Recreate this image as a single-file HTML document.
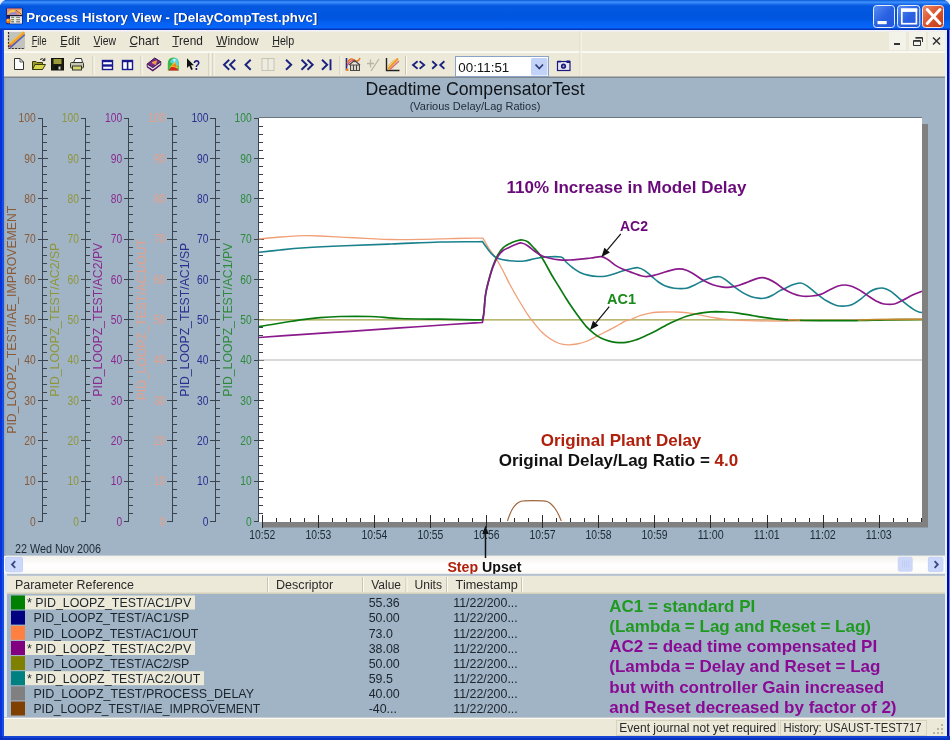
<!DOCTYPE html>
<html><head><meta charset="utf-8"><title>Process History View - [DelayCompTest.phvc]</title>
<style>html,body{margin:0;padding:0;background:#fff;}body{width:950px;height:740px;overflow:hidden;position:relative}svg{display:block}text{font-family:"Liberation Sans", sans-serif;}</style>
</head><body>
<svg width="950" height="740" viewBox="0 0 950 740" font-family='"Liberation Sans", sans-serif'>
<g style="filter:blur(0.45px)">
<defs>
<linearGradient id="gt" x1="0" y1="0" x2="0" y2="1"><stop offset="0" stop-color="#0a58d6"/><stop offset="0.04" stop-color="#2a7cf0"/><stop offset="0.08" stop-color="#3c90fb"/><stop offset="0.14" stop-color="#1c6cec"/><stop offset="0.2" stop-color="#0458e0"/><stop offset="0.62" stop-color="#0055e0"/><stop offset="0.75" stop-color="#0560f0"/><stop offset="0.93" stop-color="#0766fb"/><stop offset="0.96" stop-color="#0540c8"/><stop offset="1" stop-color="#0030b0"/></linearGradient>
<linearGradient id="gb" x1="0" y1="0" x2="1" y2="1"><stop offset="0" stop-color="#5b8ff5"/><stop offset="0.5" stop-color="#2a62e2"/><stop offset="1" stop-color="#2455d8"/></linearGradient>
<linearGradient id="gc" x1="0" y1="0" x2="1" y2="1"><stop offset="0" stop-color="#ee8a6a"/><stop offset="0.5" stop-color="#d9532d"/><stop offset="1" stop-color="#c23a18"/></linearGradient>
<linearGradient id="gs" x1="0" y1="0" x2="0" y2="1"><stop offset="0" stop-color="#f4f2ec"/><stop offset="0.5" stop-color="#ffffff"/><stop offset="1" stop-color="#fbfaf6"/></linearGradient>
</defs>
<rect x="0" y="0" width="950" height="740" fill="#0a3ad0"/>
<rect x="0" y="0" width="950" height="30" fill="url(#gt)"/>
<rect x="0" y="30" width="4" height="710" fill="#0a30d8"/><rect x="2" y="30" width="2" height="706" fill="#1450e6"/>
<rect x="946" y="30" width="4" height="710" fill="#000c94"/><rect x="949" y="30" width="1" height="710" fill="#7878f4"/>
<rect x="0" y="736" width="950" height="4" fill="#0a30c0"/><rect x="3" y="736" width="944" height="2" fill="#1444d4"/>
<path d="M0,0 L5,0 Q1.5,1.5 0,5 Z" fill="#e8eefc"/><path d="M950,0 L945,0 Q948.5,1.5 950,5 Z" fill="#e8eefc"/>
<g><rect x="6.3" y="7.8" width="16.4" height="16.4" rx="1" fill="#141a78"/><rect x="7" y="8.4" width="15" height="7" fill="#e48c74"/><path d="M7.5,13.5 Q11,8.5 15.5,10.2 L14,12.6 Q10.5,11.5 8,14.5 Z" fill="#f2cc4c"/><path d="M8,14.6 Q11,11.8 15,12.2 L18,14.8 Z" fill="#8c8cda"/><path d="M15.5,9.6 L22,10.5 V14.8 H19.5 Z" fill="#f0c07c"/><path d="M15.8,10 L21.6,14.4" stroke="#8a4a3a" stroke-width="0.9"/><rect x="7" y="15" width="15" height="1" fill="#1a1a2a"/><rect x="10" y="16.2" width="12" height="7.4" fill="#e6e6e2"/><path d="M11.2,17.4h2.8M11.2,19.6h2.8M11.2,21.8h2.8" stroke="#6e8a6a" stroke-width="1.4"/><path d="M16.2,17.4h3.8M16.2,19.6h3.8M16.2,21.8h3.8" stroke="#8a8a84" stroke-width="1.4"/><circle cx="8.4" cy="21" r="2.4" fill="#ee7a18"/><circle cx="7.9" cy="19.9" r="1" fill="#f8d048"/></g>
<text x="27.1" y="22.2" font-size="13.2" fill="#0a2a80" textLength="291" lengthAdjust="spacingAndGlyphs" font-weight="bold">Process History View - [DelayCompTest.phvc]</text>
<text x="26.3" y="21.5" font-size="13.2" fill="#ffffff" textLength="291" lengthAdjust="spacingAndGlyphs" font-weight="bold">Process History View - [DelayCompTest.phvc]</text>
<rect x="873.5" y="5.5" width="21" height="22" rx="3" fill="url(#gb)" stroke="#e6eefc" stroke-width="1"/>
<rect x="877.5" y="21" width="9.2" height="3.2" fill="#fff"/>
<rect x="897.5" y="5.5" width="22.3" height="22" rx="3" fill="url(#gb)" stroke="#e6eefc" stroke-width="1"/>
<rect x="901.8" y="9.3" width="14.6" height="14.4" fill="none" stroke="#fff" stroke-width="1.7"/><rect x="901" y="8.5" width="16.2" height="3.4" fill="#fff"/>
<rect x="922.5" y="5.5" width="21" height="22" rx="3" fill="url(#gc)" stroke="#f6e6e0" stroke-width="1"/>
<path d="M927.2,9.6 L940,23.4 M940,9.6 L927.2,23.4" stroke="#fff" stroke-width="3" stroke-linecap="round"/>
<rect x="4" y="30" width="942" height="22" fill="#ece9d8"/><rect x="4" y="30" width="942" height="1.6" fill="#f2f2f8"/>
<rect x="4" y="51" width="942" height="1" fill="#f8f7f0"/>
<g><rect x="8" y="32" width="17" height="17" fill="#c2c2be"/><path d="M8.5,32V48.5H25" stroke="#2a2a2a" stroke-width="1.2" stroke-dasharray="2 1.3" fill="none"/><path d="M10,47.5 L24.5,34.5" stroke="#4a5ac8" stroke-width="2.2"/><path d="M9.5,45 L24,32.5" stroke="#f0a028" stroke-width="3"/><path d="M9.5,43.6 L22.5,32.4" stroke="#f4d050" stroke-width="1"/><path d="M9.2,46.6 L11,45" stroke="#d85a3a" stroke-width="2"/></g>
<text x="31.7" y="44.8" font-size="12.6" fill="#222" textLength="14.8" lengthAdjust="spacingAndGlyphs">File</text>
<text x="60.3" y="44.8" font-size="12.6" fill="#222" textLength="19.7" lengthAdjust="spacingAndGlyphs">Edit</text>
<text x="93.6" y="44.8" font-size="12.6" fill="#222" textLength="22.4" lengthAdjust="spacingAndGlyphs">View</text>
<text x="129.6" y="44.8" font-size="12.6" fill="#222" textLength="29.6" lengthAdjust="spacingAndGlyphs">Chart</text>
<text x="172.3" y="44.8" font-size="12.6" fill="#222" textLength="30.6" lengthAdjust="spacingAndGlyphs">Trend</text>
<text x="216.2" y="44.8" font-size="12.6" fill="#222" textLength="42.3" lengthAdjust="spacingAndGlyphs">Window</text>
<text x="272.2" y="44.8" font-size="12.6" fill="#222" textLength="22" lengthAdjust="spacingAndGlyphs">Help</text>
<rect x="31.7" y="46" width="5.5" height="1" fill="#333"/>
<rect x="60.3" y="46" width="6" height="1" fill="#333"/>
<rect x="93.6" y="46" width="6.5" height="1" fill="#333"/>
<rect x="129.6" y="46" width="7" height="1" fill="#333"/>
<rect x="172.3" y="46" width="6" height="1" fill="#333"/>
<rect x="216.2" y="46" width="9.5" height="1" fill="#333"/>
<rect x="272.2" y="46" width="7" height="1" fill="#333"/>
<rect x="889" y="32" width="17" height="18" fill="#f4f3ea"/>
<rect x="909" y="32" width="17" height="18" fill="#f4f3ea"/>
<rect x="928" y="32" width="17" height="18" fill="#f4f3ea"/>
<rect x="894" y="43" width="6" height="2" fill="#333"/>
<path d="M915.5,37.5H922.5V42 M913.5,40.5H920.5V45.5H913.5Z M913.5,41.3H920.5 M915.5,38.2H922.5" stroke="#333" stroke-width="1" fill="none"/>
<path d="M933,37.5 L940,44.5 M940,37.5 L933,44.5" stroke="#333" stroke-width="1.5"/>
<rect x="4" y="52" width="942" height="26" fill="#ece9d8"/>
<rect x="4" y="52" width="942" height="1" fill="#fbfaf4"/>
<rect x="4" y="76.5" width="942" height="1.5" fill="#7e868e"/>
<rect x="92.5" y="56" width="1" height="19" fill="#c8c5b2"/><rect x="93.5" y="56" width="1" height="19" fill="#fbfaf4"/>
<rect x="140.5" y="56" width="1" height="19" fill="#c8c5b2"/><rect x="141.5" y="56" width="1" height="19" fill="#fbfaf4"/>
<rect x="339.5" y="56" width="1" height="19" fill="#c8c5b2"/><rect x="340.5" y="56" width="1" height="19" fill="#fbfaf4"/>
<rect x="405" y="56" width="1" height="19" fill="#c8c5b2"/><rect x="406" y="56" width="1" height="19" fill="#fbfaf4"/>
<rect x="208.5" y="53" width="1" height="23" fill="#c4c1ae"/><rect x="209.5" y="53" width="1" height="23" fill="#fbfaf4"/>
<rect x="212.5" y="53" width="1" height="23" fill="#c4c1ae"/><rect x="213.5" y="53" width="1" height="23" fill="#fbfaf4"/>
<rect x="579.5" y="31" width="1" height="45" fill="#dcd9c8"/><rect x="580.5" y="31" width="1" height="45" fill="#f8f7f0"/>
<path d="M14.5,58.5H20L23.5,62V69.5H14.5Z" fill="#fff" stroke="#333" stroke-width="1"/><path d="M20,58.5V62H23.5" fill="none" stroke="#333" stroke-width="0.8"/>
<path d="M32.5,61.5H36L37,62.5H42.5V69.5H32.5Z" fill="#9a9a20" stroke="#3a3a10" stroke-width="1"/><path d="M32.5,69.5L35,64.5H45.5L42.5,69.5Z" fill="#d6d64a" stroke="#3a3a10" stroke-width="1"/><path d="M40,59.5Q42.5,57.5 44.5,60 M44.8,58V60.6H42.4" stroke="#222" stroke-width="1" fill="none"/>
<rect x="51.5" y="58.5" width="12" height="11.5" fill="#1a1a10" stroke="#111" stroke-width="1"/><rect x="53.5" y="59" width="8" height="5" fill="#9a9a3a"/><rect x="54.5" y="65.5" width="6" height="4.5" fill="#111"/><rect x="58.5" y="66.5" width="2" height="3" fill="#d8d8c8"/>
<path d="M73.5,62.5L75.5,58.5H81.5L82.5,62.5" fill="#fff" stroke="#333" stroke-width="1"/><rect x="70.5" y="62.5" width="13" height="5.5" rx="1" fill="#c8c8b0" stroke="#333" stroke-width="1"/><rect x="72.5" y="66" width="9" height="4" fill="#d8d86a" stroke="#333" stroke-width="1"/>
<rect x="102.5" y="60.5" width="10" height="9" fill="#fff" stroke="#1a1a90" stroke-width="1.4"/><rect x="102" y="60" width="11" height="2.2" fill="#1a1a90"/><rect x="102" y="64.3" width="11" height="2.4" fill="#1a1a90"/>
<rect x="122.5" y="60.5" width="10" height="9" fill="#fff" stroke="#1a1a90" stroke-width="1.4"/><rect x="122" y="60" width="11" height="2.2" fill="#1a1a90"/><rect x="126.8" y="60" width="1.6" height="10" fill="#1a1a90"/>
<path d="M147.2,64 L154.7,58 L160.8,61.8 L152.8,67.6 Z" fill="#7a2a8a" stroke="#3a1048" stroke-width="1"/><path d="M147.2,64 V66.8 L152.8,70.6 L160.8,64.6 V61.8 L152.8,67.6 Z" fill="#e4dcec" stroke="#3a1048" stroke-width="0.9"/><path d="M147.2,66.8 L152.8,70.6 L160.8,64.6" fill="none" stroke="#5a1a6a" stroke-width="1.3"/><path d="M152,62.6 L156.5,60.8 L155.5,64.6 Z" fill="#f09a28" stroke="#f0b050" stroke-width="0.8"/>
<path d="M167.8,70.5 V63.5 Q167.8,57.5 173.3,57.5 Q178.8,57.5 178.8,63.5 V70.5 Z" fill="#3ab84a"/><path d="M170,62 Q172,57 176.5,58.6 Q178.6,60 178.4,66 L174,64.5Z" fill="#5ad6e6"/><path d="M172.5,59.5 L175.5,59 L175,62 Z" fill="#e8f8fa"/><path d="M169.5,67.5 L175,61.5 L178,68 Z" fill="#f0d020"/><path d="M171.5,66 L175.5,63 L176.8,67 Z" fill="#f08020"/><path d="M168.5,70.6 L171.5,66.8 L175.5,67.6 L178.8,70.6 Z" fill="#e02020"/>
<path d="M187,58.2 L187,68 L189.3,65.8 L191.2,70 L192.8,69.3 L191,65.2 L194,65.2 Z" fill="#111"/>
<text x="193" y="69.6" font-size="15" fill="#1a1a80" textLength="7.2" lengthAdjust="spacingAndGlyphs" font-weight="bold">?</text>
<path d="M229.2,59.8 L224,64.8 L229.2,69.8 M235.2,59.8 L230,64.8 L235.2,69.8 M250.7,59.8 L245.5,64.8 L250.7,69.8 M286,59.8 L291.2,64.8 L286,69.8 M301.5,59.8 L306.7,64.8 L301.5,69.8 M307.5,59.8 L312.7,64.8 L307.5,69.8 M322,59.8 L327.2,64.8 L322,69.8 M330.5,59.3V70.3" fill="none" stroke="#1a2380" stroke-width="1.9"/>
<rect x="262" y="58.5" width="12" height="12" fill="#eeece0" stroke="#c6c4b4" stroke-width="1"/><path d="M268,58.5V70.5" stroke="#c6c4b4" stroke-width="1"/>
<g><path d="M346.5,58V70.5" stroke="#1a2a90" stroke-width="1.6"/><path d="M347,63 Q350,57 354,60 T360,58" stroke="#e8782a" stroke-width="1.6" fill="none"/><path d="M347,66 Q351,58 355,62" stroke="#d84a6a" stroke-width="1.2" fill="none"/><path d="M349,65 L354.5,60.5 L360,65" stroke="#4a4a4a" stroke-width="1.3" fill="none"/><rect x="350.5" y="65" width="9" height="5.5" fill="#d8d4c8" stroke="#4a4a4a" stroke-width="1"/><path d="M353.5,65V70.5M356.5,65V70.5" stroke="#4a4a4a" stroke-width="1"/><rect x="346" y="68.5" width="2.5" height="2.5" fill="#f08a20"/></g>
<path d="M367,63.5H374 M370.5,59.5V67.5 M379,59 L371,71" stroke="#b8b5a2" stroke-width="1.3" fill="none"/>
<path d="M386.5,58V70.5H399.5" stroke="#222" stroke-width="1.4" fill="none"/><path d="M388,69 L398,58.5" stroke="#f09a28" stroke-width="2.2"/><path d="M390,69.5 L399,61" stroke="#d86a7a" stroke-width="1.3"/><path d="M387.5,66.5 L394,59.5" stroke="#e8c040" stroke-width="1"/>
<path d="M417.6,61.3 L413,65.0 L417.6,68.7 M419.6,61.3 L424.20000000000005,65.0 L419.6,68.7 M432.2,61.3 L436.4,65.0 L432.2,68.7 M444.4,61.3 L440.2,65.0 L444.4,68.7" fill="none" stroke="#1a2380" stroke-width="1.8"/>
<rect x="455.5" y="56.5" width="93" height="20" fill="#fff" stroke="#8aa2c4" stroke-width="1"/>
<rect x="531" y="58" width="16.5" height="17.5" rx="1.5" fill="#c3d3f7"/>
<path d="M535.5,64.5 L539.3,68.5 L543,64.5" stroke="#2a3a80" stroke-width="1.7" fill="none"/>
<text x="458.3" y="71.6" font-size="13.4" fill="#111" textLength="51" lengthAdjust="spacingAndGlyphs">00:11:51</text>
<rect x="557.5" y="61.5" width="12.5" height="9" fill="#e8e8f4" stroke="#1a1a80" stroke-width="1.2"/><circle cx="563.5" cy="66.2" r="2.6" fill="#1a1a80"/><circle cx="563.5" cy="66.2" r="1" fill="#aab"/><rect x="566.5" y="60.5" width="3.5" height="2.5" fill="#1a1a80"/><rect x="558" y="60.8" width="3" height="1.6" fill="#1a1a80"/>
<rect x="4" y="78" width="942" height="478" fill="#a0b4c6"/>
<rect x="263" y="124" width="665" height="403.5" fill="#808080"/>
<rect x="259" y="118" width="663" height="404" fill="#ffffff"/>
<rect x="259" y="117" width="663" height="1" fill="#6a7680"/>
<g stroke="#3a444e" stroke-width="1" shape-rendering="crispEdges">
<line x1="258.5" y1="118" x2="258.5" y2="522"/>
<line x1="253.5" y1="521.5" x2="258.5" y2="521.5"/>
<line x1="258.5" y1="513.4" x2="263.0" y2="513.4"/>
<line x1="258.5" y1="505.4" x2="263.0" y2="505.4"/>
<line x1="258.5" y1="497.3" x2="263.0" y2="497.3"/>
<line x1="258.5" y1="489.2" x2="263.0" y2="489.2"/>
<line x1="253.5" y1="481.1" x2="263.5" y2="481.1"/>
<line x1="258.5" y1="473.1" x2="263.0" y2="473.1"/>
<line x1="258.5" y1="465.0" x2="263.0" y2="465.0"/>
<line x1="258.5" y1="456.9" x2="263.0" y2="456.9"/>
<line x1="258.5" y1="448.9" x2="263.0" y2="448.9"/>
<line x1="253.5" y1="440.8" x2="263.5" y2="440.8"/>
<line x1="258.5" y1="432.7" x2="263.0" y2="432.7"/>
<line x1="258.5" y1="424.7" x2="263.0" y2="424.7"/>
<line x1="258.5" y1="416.6" x2="263.0" y2="416.6"/>
<line x1="258.5" y1="408.5" x2="263.0" y2="408.5"/>
<line x1="253.5" y1="400.4" x2="263.5" y2="400.4"/>
<line x1="258.5" y1="392.4" x2="263.0" y2="392.4"/>
<line x1="258.5" y1="384.3" x2="263.0" y2="384.3"/>
<line x1="258.5" y1="376.2" x2="263.0" y2="376.2"/>
<line x1="258.5" y1="368.2" x2="263.0" y2="368.2"/>
<line x1="253.5" y1="360.1" x2="263.5" y2="360.1"/>
<line x1="258.5" y1="352.0" x2="263.0" y2="352.0"/>
<line x1="258.5" y1="344.0" x2="263.0" y2="344.0"/>
<line x1="258.5" y1="335.9" x2="263.0" y2="335.9"/>
<line x1="258.5" y1="327.8" x2="263.0" y2="327.8"/>
<line x1="253.5" y1="319.8" x2="263.5" y2="319.8"/>
<line x1="258.5" y1="311.7" x2="263.0" y2="311.7"/>
<line x1="258.5" y1="303.6" x2="263.0" y2="303.6"/>
<line x1="258.5" y1="295.5" x2="263.0" y2="295.5"/>
<line x1="258.5" y1="287.5" x2="263.0" y2="287.5"/>
<line x1="253.5" y1="279.4" x2="263.5" y2="279.4"/>
<line x1="258.5" y1="271.3" x2="263.0" y2="271.3"/>
<line x1="258.5" y1="263.3" x2="263.0" y2="263.3"/>
<line x1="258.5" y1="255.2" x2="263.0" y2="255.2"/>
<line x1="258.5" y1="247.1" x2="263.0" y2="247.1"/>
<line x1="253.5" y1="239.1" x2="263.5" y2="239.1"/>
<line x1="258.5" y1="231.0" x2="263.0" y2="231.0"/>
<line x1="258.5" y1="222.9" x2="263.0" y2="222.9"/>
<line x1="258.5" y1="214.8" x2="263.0" y2="214.8"/>
<line x1="258.5" y1="206.8" x2="263.0" y2="206.8"/>
<line x1="253.5" y1="198.7" x2="263.5" y2="198.7"/>
<line x1="258.5" y1="190.6" x2="263.0" y2="190.6"/>
<line x1="258.5" y1="182.6" x2="263.0" y2="182.6"/>
<line x1="258.5" y1="174.5" x2="263.0" y2="174.5"/>
<line x1="258.5" y1="166.4" x2="263.0" y2="166.4"/>
<line x1="253.5" y1="158.3" x2="263.5" y2="158.3"/>
<line x1="258.5" y1="150.3" x2="263.0" y2="150.3"/>
<line x1="258.5" y1="142.2" x2="263.0" y2="142.2"/>
<line x1="258.5" y1="134.1" x2="263.0" y2="134.1"/>
<line x1="258.5" y1="126.1" x2="263.0" y2="126.1"/>
<line x1="253.5" y1="118.0" x2="258.5" y2="118.0"/>
</g>
<g fill="#2e8b3a" font-size="12.5" text-anchor="end">
<text x="251.7" y="525.8" textLength="5.7" lengthAdjust="spacingAndGlyphs">0</text>
<text x="251.7" y="485.4" textLength="11.4" lengthAdjust="spacingAndGlyphs">10</text>
<text x="251.7" y="445.1" textLength="11.4" lengthAdjust="spacingAndGlyphs">20</text>
<text x="251.7" y="404.8" textLength="11.4" lengthAdjust="spacingAndGlyphs">30</text>
<text x="251.7" y="364.4" textLength="11.4" lengthAdjust="spacingAndGlyphs">40</text>
<text x="251.7" y="324.1" textLength="11.4" lengthAdjust="spacingAndGlyphs">50</text>
<text x="251.7" y="283.7" textLength="11.4" lengthAdjust="spacingAndGlyphs">60</text>
<text x="251.7" y="243.4" textLength="11.4" lengthAdjust="spacingAndGlyphs">70</text>
<text x="251.7" y="203.0" textLength="11.4" lengthAdjust="spacingAndGlyphs">80</text>
<text x="251.7" y="162.6" textLength="11.4" lengthAdjust="spacingAndGlyphs">90</text>
<text x="251.7" y="122.3" textLength="17.1" lengthAdjust="spacingAndGlyphs">100</text>
</g>
<text transform="translate(231.9,396.7) rotate(-90)" font-size="12.5" fill="#2e8b3a" textLength="154" lengthAdjust="spacingAndGlyphs">PID_LOOPZ_TEST/AC1/PV</text>
<g stroke="#3a444e" stroke-width="1" shape-rendering="crispEdges">
<line x1="215.3" y1="118" x2="215.3" y2="522"/>
<line x1="210.3" y1="521.5" x2="215.3" y2="521.5"/>
<line x1="215.3" y1="513.4" x2="219.8" y2="513.4"/>
<line x1="215.3" y1="505.4" x2="219.8" y2="505.4"/>
<line x1="215.3" y1="497.3" x2="219.8" y2="497.3"/>
<line x1="215.3" y1="489.2" x2="219.8" y2="489.2"/>
<line x1="210.3" y1="481.1" x2="220.3" y2="481.1"/>
<line x1="215.3" y1="473.1" x2="219.8" y2="473.1"/>
<line x1="215.3" y1="465.0" x2="219.8" y2="465.0"/>
<line x1="215.3" y1="456.9" x2="219.8" y2="456.9"/>
<line x1="215.3" y1="448.9" x2="219.8" y2="448.9"/>
<line x1="210.3" y1="440.8" x2="220.3" y2="440.8"/>
<line x1="215.3" y1="432.7" x2="219.8" y2="432.7"/>
<line x1="215.3" y1="424.7" x2="219.8" y2="424.7"/>
<line x1="215.3" y1="416.6" x2="219.8" y2="416.6"/>
<line x1="215.3" y1="408.5" x2="219.8" y2="408.5"/>
<line x1="210.3" y1="400.4" x2="220.3" y2="400.4"/>
<line x1="215.3" y1="392.4" x2="219.8" y2="392.4"/>
<line x1="215.3" y1="384.3" x2="219.8" y2="384.3"/>
<line x1="215.3" y1="376.2" x2="219.8" y2="376.2"/>
<line x1="215.3" y1="368.2" x2="219.8" y2="368.2"/>
<line x1="210.3" y1="360.1" x2="220.3" y2="360.1"/>
<line x1="215.3" y1="352.0" x2="219.8" y2="352.0"/>
<line x1="215.3" y1="344.0" x2="219.8" y2="344.0"/>
<line x1="215.3" y1="335.9" x2="219.8" y2="335.9"/>
<line x1="215.3" y1="327.8" x2="219.8" y2="327.8"/>
<line x1="210.3" y1="319.8" x2="220.3" y2="319.8"/>
<line x1="215.3" y1="311.7" x2="219.8" y2="311.7"/>
<line x1="215.3" y1="303.6" x2="219.8" y2="303.6"/>
<line x1="215.3" y1="295.5" x2="219.8" y2="295.5"/>
<line x1="215.3" y1="287.5" x2="219.8" y2="287.5"/>
<line x1="210.3" y1="279.4" x2="220.3" y2="279.4"/>
<line x1="215.3" y1="271.3" x2="219.8" y2="271.3"/>
<line x1="215.3" y1="263.3" x2="219.8" y2="263.3"/>
<line x1="215.3" y1="255.2" x2="219.8" y2="255.2"/>
<line x1="215.3" y1="247.1" x2="219.8" y2="247.1"/>
<line x1="210.3" y1="239.1" x2="220.3" y2="239.1"/>
<line x1="215.3" y1="231.0" x2="219.8" y2="231.0"/>
<line x1="215.3" y1="222.9" x2="219.8" y2="222.9"/>
<line x1="215.3" y1="214.8" x2="219.8" y2="214.8"/>
<line x1="215.3" y1="206.8" x2="219.8" y2="206.8"/>
<line x1="210.3" y1="198.7" x2="220.3" y2="198.7"/>
<line x1="215.3" y1="190.6" x2="219.8" y2="190.6"/>
<line x1="215.3" y1="182.6" x2="219.8" y2="182.6"/>
<line x1="215.3" y1="174.5" x2="219.8" y2="174.5"/>
<line x1="215.3" y1="166.4" x2="219.8" y2="166.4"/>
<line x1="210.3" y1="158.3" x2="220.3" y2="158.3"/>
<line x1="215.3" y1="150.3" x2="219.8" y2="150.3"/>
<line x1="215.3" y1="142.2" x2="219.8" y2="142.2"/>
<line x1="215.3" y1="134.1" x2="219.8" y2="134.1"/>
<line x1="215.3" y1="126.1" x2="219.8" y2="126.1"/>
<line x1="210.3" y1="118.0" x2="215.3" y2="118.0"/>
</g>
<g fill="#2b2f8f" font-size="12.5" text-anchor="end">
<text x="208.5" y="525.8" textLength="5.7" lengthAdjust="spacingAndGlyphs">0</text>
<text x="208.5" y="485.4" textLength="11.4" lengthAdjust="spacingAndGlyphs">10</text>
<text x="208.5" y="445.1" textLength="11.4" lengthAdjust="spacingAndGlyphs">20</text>
<text x="208.5" y="404.8" textLength="11.4" lengthAdjust="spacingAndGlyphs">30</text>
<text x="208.5" y="364.4" textLength="11.4" lengthAdjust="spacingAndGlyphs">40</text>
<text x="208.5" y="324.1" textLength="11.4" lengthAdjust="spacingAndGlyphs">50</text>
<text x="208.5" y="283.7" textLength="11.4" lengthAdjust="spacingAndGlyphs">60</text>
<text x="208.5" y="243.4" textLength="11.4" lengthAdjust="spacingAndGlyphs">70</text>
<text x="208.5" y="203.0" textLength="11.4" lengthAdjust="spacingAndGlyphs">80</text>
<text x="208.5" y="162.6" textLength="11.4" lengthAdjust="spacingAndGlyphs">90</text>
<text x="208.5" y="122.3" textLength="17.1" lengthAdjust="spacingAndGlyphs">100</text>
</g>
<text transform="translate(188.7,396.7) rotate(-90)" font-size="12.5" fill="#2b2f8f" textLength="154" lengthAdjust="spacingAndGlyphs">PID_LOOPZ_TEST/AC1/SP</text>
<g stroke="#3a444e" stroke-width="1" shape-rendering="crispEdges">
<line x1="172.1" y1="118" x2="172.1" y2="522"/>
<line x1="167.1" y1="521.5" x2="172.1" y2="521.5"/>
<line x1="172.1" y1="513.4" x2="176.6" y2="513.4"/>
<line x1="172.1" y1="505.4" x2="176.6" y2="505.4"/>
<line x1="172.1" y1="497.3" x2="176.6" y2="497.3"/>
<line x1="172.1" y1="489.2" x2="176.6" y2="489.2"/>
<line x1="167.1" y1="481.1" x2="177.1" y2="481.1"/>
<line x1="172.1" y1="473.1" x2="176.6" y2="473.1"/>
<line x1="172.1" y1="465.0" x2="176.6" y2="465.0"/>
<line x1="172.1" y1="456.9" x2="176.6" y2="456.9"/>
<line x1="172.1" y1="448.9" x2="176.6" y2="448.9"/>
<line x1="167.1" y1="440.8" x2="177.1" y2="440.8"/>
<line x1="172.1" y1="432.7" x2="176.6" y2="432.7"/>
<line x1="172.1" y1="424.7" x2="176.6" y2="424.7"/>
<line x1="172.1" y1="416.6" x2="176.6" y2="416.6"/>
<line x1="172.1" y1="408.5" x2="176.6" y2="408.5"/>
<line x1="167.1" y1="400.4" x2="177.1" y2="400.4"/>
<line x1="172.1" y1="392.4" x2="176.6" y2="392.4"/>
<line x1="172.1" y1="384.3" x2="176.6" y2="384.3"/>
<line x1="172.1" y1="376.2" x2="176.6" y2="376.2"/>
<line x1="172.1" y1="368.2" x2="176.6" y2="368.2"/>
<line x1="167.1" y1="360.1" x2="177.1" y2="360.1"/>
<line x1="172.1" y1="352.0" x2="176.6" y2="352.0"/>
<line x1="172.1" y1="344.0" x2="176.6" y2="344.0"/>
<line x1="172.1" y1="335.9" x2="176.6" y2="335.9"/>
<line x1="172.1" y1="327.8" x2="176.6" y2="327.8"/>
<line x1="167.1" y1="319.8" x2="177.1" y2="319.8"/>
<line x1="172.1" y1="311.7" x2="176.6" y2="311.7"/>
<line x1="172.1" y1="303.6" x2="176.6" y2="303.6"/>
<line x1="172.1" y1="295.5" x2="176.6" y2="295.5"/>
<line x1="172.1" y1="287.5" x2="176.6" y2="287.5"/>
<line x1="167.1" y1="279.4" x2="177.1" y2="279.4"/>
<line x1="172.1" y1="271.3" x2="176.6" y2="271.3"/>
<line x1="172.1" y1="263.3" x2="176.6" y2="263.3"/>
<line x1="172.1" y1="255.2" x2="176.6" y2="255.2"/>
<line x1="172.1" y1="247.1" x2="176.6" y2="247.1"/>
<line x1="167.1" y1="239.1" x2="177.1" y2="239.1"/>
<line x1="172.1" y1="231.0" x2="176.6" y2="231.0"/>
<line x1="172.1" y1="222.9" x2="176.6" y2="222.9"/>
<line x1="172.1" y1="214.8" x2="176.6" y2="214.8"/>
<line x1="172.1" y1="206.8" x2="176.6" y2="206.8"/>
<line x1="167.1" y1="198.7" x2="177.1" y2="198.7"/>
<line x1="172.1" y1="190.6" x2="176.6" y2="190.6"/>
<line x1="172.1" y1="182.6" x2="176.6" y2="182.6"/>
<line x1="172.1" y1="174.5" x2="176.6" y2="174.5"/>
<line x1="172.1" y1="166.4" x2="176.6" y2="166.4"/>
<line x1="167.1" y1="158.3" x2="177.1" y2="158.3"/>
<line x1="172.1" y1="150.3" x2="176.6" y2="150.3"/>
<line x1="172.1" y1="142.2" x2="176.6" y2="142.2"/>
<line x1="172.1" y1="134.1" x2="176.6" y2="134.1"/>
<line x1="172.1" y1="126.1" x2="176.6" y2="126.1"/>
<line x1="167.1" y1="118.0" x2="172.1" y2="118.0"/>
</g>
<g fill="#e8a088" font-size="12.5" text-anchor="end">
<text x="165.3" y="525.8" textLength="5.7" lengthAdjust="spacingAndGlyphs">0</text>
<text x="165.3" y="485.4" textLength="11.4" lengthAdjust="spacingAndGlyphs">10</text>
<text x="165.3" y="445.1" textLength="11.4" lengthAdjust="spacingAndGlyphs">20</text>
<text x="165.3" y="404.8" textLength="11.4" lengthAdjust="spacingAndGlyphs">30</text>
<text x="165.3" y="364.4" textLength="11.4" lengthAdjust="spacingAndGlyphs">40</text>
<text x="165.3" y="324.1" textLength="11.4" lengthAdjust="spacingAndGlyphs">50</text>
<text x="165.3" y="283.7" textLength="11.4" lengthAdjust="spacingAndGlyphs">60</text>
<text x="165.3" y="243.4" textLength="11.4" lengthAdjust="spacingAndGlyphs">70</text>
<text x="165.3" y="203.0" textLength="11.4" lengthAdjust="spacingAndGlyphs">80</text>
<text x="165.3" y="162.6" textLength="11.4" lengthAdjust="spacingAndGlyphs">90</text>
<text x="165.3" y="122.3" textLength="17.1" lengthAdjust="spacingAndGlyphs">100</text>
</g>
<text transform="translate(145.5,400.2) rotate(-90)" font-size="12.5" fill="#e8a088" textLength="161" lengthAdjust="spacingAndGlyphs">PID_LOOPZ_TEST/AC1/OUT</text>
<g stroke="#3a444e" stroke-width="1" shape-rendering="crispEdges">
<line x1="128.9" y1="118" x2="128.9" y2="522"/>
<line x1="123.9" y1="521.5" x2="128.9" y2="521.5"/>
<line x1="128.9" y1="513.4" x2="133.4" y2="513.4"/>
<line x1="128.9" y1="505.4" x2="133.4" y2="505.4"/>
<line x1="128.9" y1="497.3" x2="133.4" y2="497.3"/>
<line x1="128.9" y1="489.2" x2="133.4" y2="489.2"/>
<line x1="123.9" y1="481.1" x2="133.9" y2="481.1"/>
<line x1="128.9" y1="473.1" x2="133.4" y2="473.1"/>
<line x1="128.9" y1="465.0" x2="133.4" y2="465.0"/>
<line x1="128.9" y1="456.9" x2="133.4" y2="456.9"/>
<line x1="128.9" y1="448.9" x2="133.4" y2="448.9"/>
<line x1="123.9" y1="440.8" x2="133.9" y2="440.8"/>
<line x1="128.9" y1="432.7" x2="133.4" y2="432.7"/>
<line x1="128.9" y1="424.7" x2="133.4" y2="424.7"/>
<line x1="128.9" y1="416.6" x2="133.4" y2="416.6"/>
<line x1="128.9" y1="408.5" x2="133.4" y2="408.5"/>
<line x1="123.9" y1="400.4" x2="133.9" y2="400.4"/>
<line x1="128.9" y1="392.4" x2="133.4" y2="392.4"/>
<line x1="128.9" y1="384.3" x2="133.4" y2="384.3"/>
<line x1="128.9" y1="376.2" x2="133.4" y2="376.2"/>
<line x1="128.9" y1="368.2" x2="133.4" y2="368.2"/>
<line x1="123.9" y1="360.1" x2="133.9" y2="360.1"/>
<line x1="128.9" y1="352.0" x2="133.4" y2="352.0"/>
<line x1="128.9" y1="344.0" x2="133.4" y2="344.0"/>
<line x1="128.9" y1="335.9" x2="133.4" y2="335.9"/>
<line x1="128.9" y1="327.8" x2="133.4" y2="327.8"/>
<line x1="123.9" y1="319.8" x2="133.9" y2="319.8"/>
<line x1="128.9" y1="311.7" x2="133.4" y2="311.7"/>
<line x1="128.9" y1="303.6" x2="133.4" y2="303.6"/>
<line x1="128.9" y1="295.5" x2="133.4" y2="295.5"/>
<line x1="128.9" y1="287.5" x2="133.4" y2="287.5"/>
<line x1="123.9" y1="279.4" x2="133.9" y2="279.4"/>
<line x1="128.9" y1="271.3" x2="133.4" y2="271.3"/>
<line x1="128.9" y1="263.3" x2="133.4" y2="263.3"/>
<line x1="128.9" y1="255.2" x2="133.4" y2="255.2"/>
<line x1="128.9" y1="247.1" x2="133.4" y2="247.1"/>
<line x1="123.9" y1="239.1" x2="133.9" y2="239.1"/>
<line x1="128.9" y1="231.0" x2="133.4" y2="231.0"/>
<line x1="128.9" y1="222.9" x2="133.4" y2="222.9"/>
<line x1="128.9" y1="214.8" x2="133.4" y2="214.8"/>
<line x1="128.9" y1="206.8" x2="133.4" y2="206.8"/>
<line x1="123.9" y1="198.7" x2="133.9" y2="198.7"/>
<line x1="128.9" y1="190.6" x2="133.4" y2="190.6"/>
<line x1="128.9" y1="182.6" x2="133.4" y2="182.6"/>
<line x1="128.9" y1="174.5" x2="133.4" y2="174.5"/>
<line x1="128.9" y1="166.4" x2="133.4" y2="166.4"/>
<line x1="123.9" y1="158.3" x2="133.9" y2="158.3"/>
<line x1="128.9" y1="150.3" x2="133.4" y2="150.3"/>
<line x1="128.9" y1="142.2" x2="133.4" y2="142.2"/>
<line x1="128.9" y1="134.1" x2="133.4" y2="134.1"/>
<line x1="128.9" y1="126.1" x2="133.4" y2="126.1"/>
<line x1="123.9" y1="118.0" x2="128.9" y2="118.0"/>
</g>
<g fill="#8a2a8f" font-size="12.5" text-anchor="end">
<text x="122.1" y="525.8" textLength="5.7" lengthAdjust="spacingAndGlyphs">0</text>
<text x="122.1" y="485.4" textLength="11.4" lengthAdjust="spacingAndGlyphs">10</text>
<text x="122.1" y="445.1" textLength="11.4" lengthAdjust="spacingAndGlyphs">20</text>
<text x="122.1" y="404.8" textLength="11.4" lengthAdjust="spacingAndGlyphs">30</text>
<text x="122.1" y="364.4" textLength="11.4" lengthAdjust="spacingAndGlyphs">40</text>
<text x="122.1" y="324.1" textLength="11.4" lengthAdjust="spacingAndGlyphs">50</text>
<text x="122.1" y="283.7" textLength="11.4" lengthAdjust="spacingAndGlyphs">60</text>
<text x="122.1" y="243.4" textLength="11.4" lengthAdjust="spacingAndGlyphs">70</text>
<text x="122.1" y="203.0" textLength="11.4" lengthAdjust="spacingAndGlyphs">80</text>
<text x="122.1" y="162.6" textLength="11.4" lengthAdjust="spacingAndGlyphs">90</text>
<text x="122.1" y="122.3" textLength="17.1" lengthAdjust="spacingAndGlyphs">100</text>
</g>
<text transform="translate(102.3,396.7) rotate(-90)" font-size="12.5" fill="#8a2a8f" textLength="154" lengthAdjust="spacingAndGlyphs">PID_LOOPZ_TEST/AC2/PV</text>
<g stroke="#3a444e" stroke-width="1" shape-rendering="crispEdges">
<line x1="85.7" y1="118" x2="85.7" y2="522"/>
<line x1="80.7" y1="521.5" x2="85.7" y2="521.5"/>
<line x1="85.7" y1="513.4" x2="90.2" y2="513.4"/>
<line x1="85.7" y1="505.4" x2="90.2" y2="505.4"/>
<line x1="85.7" y1="497.3" x2="90.2" y2="497.3"/>
<line x1="85.7" y1="489.2" x2="90.2" y2="489.2"/>
<line x1="80.7" y1="481.1" x2="90.7" y2="481.1"/>
<line x1="85.7" y1="473.1" x2="90.2" y2="473.1"/>
<line x1="85.7" y1="465.0" x2="90.2" y2="465.0"/>
<line x1="85.7" y1="456.9" x2="90.2" y2="456.9"/>
<line x1="85.7" y1="448.9" x2="90.2" y2="448.9"/>
<line x1="80.7" y1="440.8" x2="90.7" y2="440.8"/>
<line x1="85.7" y1="432.7" x2="90.2" y2="432.7"/>
<line x1="85.7" y1="424.7" x2="90.2" y2="424.7"/>
<line x1="85.7" y1="416.6" x2="90.2" y2="416.6"/>
<line x1="85.7" y1="408.5" x2="90.2" y2="408.5"/>
<line x1="80.7" y1="400.4" x2="90.7" y2="400.4"/>
<line x1="85.7" y1="392.4" x2="90.2" y2="392.4"/>
<line x1="85.7" y1="384.3" x2="90.2" y2="384.3"/>
<line x1="85.7" y1="376.2" x2="90.2" y2="376.2"/>
<line x1="85.7" y1="368.2" x2="90.2" y2="368.2"/>
<line x1="80.7" y1="360.1" x2="90.7" y2="360.1"/>
<line x1="85.7" y1="352.0" x2="90.2" y2="352.0"/>
<line x1="85.7" y1="344.0" x2="90.2" y2="344.0"/>
<line x1="85.7" y1="335.9" x2="90.2" y2="335.9"/>
<line x1="85.7" y1="327.8" x2="90.2" y2="327.8"/>
<line x1="80.7" y1="319.8" x2="90.7" y2="319.8"/>
<line x1="85.7" y1="311.7" x2="90.2" y2="311.7"/>
<line x1="85.7" y1="303.6" x2="90.2" y2="303.6"/>
<line x1="85.7" y1="295.5" x2="90.2" y2="295.5"/>
<line x1="85.7" y1="287.5" x2="90.2" y2="287.5"/>
<line x1="80.7" y1="279.4" x2="90.7" y2="279.4"/>
<line x1="85.7" y1="271.3" x2="90.2" y2="271.3"/>
<line x1="85.7" y1="263.3" x2="90.2" y2="263.3"/>
<line x1="85.7" y1="255.2" x2="90.2" y2="255.2"/>
<line x1="85.7" y1="247.1" x2="90.2" y2="247.1"/>
<line x1="80.7" y1="239.1" x2="90.7" y2="239.1"/>
<line x1="85.7" y1="231.0" x2="90.2" y2="231.0"/>
<line x1="85.7" y1="222.9" x2="90.2" y2="222.9"/>
<line x1="85.7" y1="214.8" x2="90.2" y2="214.8"/>
<line x1="85.7" y1="206.8" x2="90.2" y2="206.8"/>
<line x1="80.7" y1="198.7" x2="90.7" y2="198.7"/>
<line x1="85.7" y1="190.6" x2="90.2" y2="190.6"/>
<line x1="85.7" y1="182.6" x2="90.2" y2="182.6"/>
<line x1="85.7" y1="174.5" x2="90.2" y2="174.5"/>
<line x1="85.7" y1="166.4" x2="90.2" y2="166.4"/>
<line x1="80.7" y1="158.3" x2="90.7" y2="158.3"/>
<line x1="85.7" y1="150.3" x2="90.2" y2="150.3"/>
<line x1="85.7" y1="142.2" x2="90.2" y2="142.2"/>
<line x1="85.7" y1="134.1" x2="90.2" y2="134.1"/>
<line x1="85.7" y1="126.1" x2="90.2" y2="126.1"/>
<line x1="80.7" y1="118.0" x2="85.7" y2="118.0"/>
</g>
<g fill="#8f963a" font-size="12.5" text-anchor="end">
<text x="78.9" y="525.8" textLength="5.7" lengthAdjust="spacingAndGlyphs">0</text>
<text x="78.9" y="485.4" textLength="11.4" lengthAdjust="spacingAndGlyphs">10</text>
<text x="78.9" y="445.1" textLength="11.4" lengthAdjust="spacingAndGlyphs">20</text>
<text x="78.9" y="404.8" textLength="11.4" lengthAdjust="spacingAndGlyphs">30</text>
<text x="78.9" y="364.4" textLength="11.4" lengthAdjust="spacingAndGlyphs">40</text>
<text x="78.9" y="324.1" textLength="11.4" lengthAdjust="spacingAndGlyphs">50</text>
<text x="78.9" y="283.7" textLength="11.4" lengthAdjust="spacingAndGlyphs">60</text>
<text x="78.9" y="243.4" textLength="11.4" lengthAdjust="spacingAndGlyphs">70</text>
<text x="78.9" y="203.0" textLength="11.4" lengthAdjust="spacingAndGlyphs">80</text>
<text x="78.9" y="162.6" textLength="11.4" lengthAdjust="spacingAndGlyphs">90</text>
<text x="78.9" y="122.3" textLength="17.1" lengthAdjust="spacingAndGlyphs">100</text>
</g>
<text transform="translate(59.1,396.7) rotate(-90)" font-size="12.5" fill="#8f963a" textLength="154" lengthAdjust="spacingAndGlyphs">PID_LOOPZ_TEST/AC2/SP</text>
<g stroke="#3a444e" stroke-width="1" shape-rendering="crispEdges">
<line x1="42.5" y1="118" x2="42.5" y2="522"/>
<line x1="37.5" y1="521.5" x2="42.5" y2="521.5"/>
<line x1="42.5" y1="513.4" x2="47.0" y2="513.4"/>
<line x1="42.5" y1="505.4" x2="47.0" y2="505.4"/>
<line x1="42.5" y1="497.3" x2="47.0" y2="497.3"/>
<line x1="42.5" y1="489.2" x2="47.0" y2="489.2"/>
<line x1="37.5" y1="481.1" x2="47.5" y2="481.1"/>
<line x1="42.5" y1="473.1" x2="47.0" y2="473.1"/>
<line x1="42.5" y1="465.0" x2="47.0" y2="465.0"/>
<line x1="42.5" y1="456.9" x2="47.0" y2="456.9"/>
<line x1="42.5" y1="448.9" x2="47.0" y2="448.9"/>
<line x1="37.5" y1="440.8" x2="47.5" y2="440.8"/>
<line x1="42.5" y1="432.7" x2="47.0" y2="432.7"/>
<line x1="42.5" y1="424.7" x2="47.0" y2="424.7"/>
<line x1="42.5" y1="416.6" x2="47.0" y2="416.6"/>
<line x1="42.5" y1="408.5" x2="47.0" y2="408.5"/>
<line x1="37.5" y1="400.4" x2="47.5" y2="400.4"/>
<line x1="42.5" y1="392.4" x2="47.0" y2="392.4"/>
<line x1="42.5" y1="384.3" x2="47.0" y2="384.3"/>
<line x1="42.5" y1="376.2" x2="47.0" y2="376.2"/>
<line x1="42.5" y1="368.2" x2="47.0" y2="368.2"/>
<line x1="37.5" y1="360.1" x2="47.5" y2="360.1"/>
<line x1="42.5" y1="352.0" x2="47.0" y2="352.0"/>
<line x1="42.5" y1="344.0" x2="47.0" y2="344.0"/>
<line x1="42.5" y1="335.9" x2="47.0" y2="335.9"/>
<line x1="42.5" y1="327.8" x2="47.0" y2="327.8"/>
<line x1="37.5" y1="319.8" x2="47.5" y2="319.8"/>
<line x1="42.5" y1="311.7" x2="47.0" y2="311.7"/>
<line x1="42.5" y1="303.6" x2="47.0" y2="303.6"/>
<line x1="42.5" y1="295.5" x2="47.0" y2="295.5"/>
<line x1="42.5" y1="287.5" x2="47.0" y2="287.5"/>
<line x1="37.5" y1="279.4" x2="47.5" y2="279.4"/>
<line x1="42.5" y1="271.3" x2="47.0" y2="271.3"/>
<line x1="42.5" y1="263.3" x2="47.0" y2="263.3"/>
<line x1="42.5" y1="255.2" x2="47.0" y2="255.2"/>
<line x1="42.5" y1="247.1" x2="47.0" y2="247.1"/>
<line x1="37.5" y1="239.1" x2="47.5" y2="239.1"/>
<line x1="42.5" y1="231.0" x2="47.0" y2="231.0"/>
<line x1="42.5" y1="222.9" x2="47.0" y2="222.9"/>
<line x1="42.5" y1="214.8" x2="47.0" y2="214.8"/>
<line x1="42.5" y1="206.8" x2="47.0" y2="206.8"/>
<line x1="37.5" y1="198.7" x2="47.5" y2="198.7"/>
<line x1="42.5" y1="190.6" x2="47.0" y2="190.6"/>
<line x1="42.5" y1="182.6" x2="47.0" y2="182.6"/>
<line x1="42.5" y1="174.5" x2="47.0" y2="174.5"/>
<line x1="42.5" y1="166.4" x2="47.0" y2="166.4"/>
<line x1="37.5" y1="158.3" x2="47.5" y2="158.3"/>
<line x1="42.5" y1="150.3" x2="47.0" y2="150.3"/>
<line x1="42.5" y1="142.2" x2="47.0" y2="142.2"/>
<line x1="42.5" y1="134.1" x2="47.0" y2="134.1"/>
<line x1="42.5" y1="126.1" x2="47.0" y2="126.1"/>
<line x1="37.5" y1="118.0" x2="42.5" y2="118.0"/>
</g>
<g fill="#8a5a36" font-size="12.5" text-anchor="end">
<text x="35.7" y="525.8" textLength="5.7" lengthAdjust="spacingAndGlyphs">0</text>
<text x="35.7" y="485.4" textLength="11.4" lengthAdjust="spacingAndGlyphs">10</text>
<text x="35.7" y="445.1" textLength="11.4" lengthAdjust="spacingAndGlyphs">20</text>
<text x="35.7" y="404.8" textLength="11.4" lengthAdjust="spacingAndGlyphs">30</text>
<text x="35.7" y="364.4" textLength="11.4" lengthAdjust="spacingAndGlyphs">40</text>
<text x="35.7" y="324.1" textLength="11.4" lengthAdjust="spacingAndGlyphs">50</text>
<text x="35.7" y="283.7" textLength="11.4" lengthAdjust="spacingAndGlyphs">60</text>
<text x="35.7" y="243.4" textLength="11.4" lengthAdjust="spacingAndGlyphs">70</text>
<text x="35.7" y="203.0" textLength="11.4" lengthAdjust="spacingAndGlyphs">80</text>
<text x="35.7" y="162.6" textLength="11.4" lengthAdjust="spacingAndGlyphs">90</text>
<text x="35.7" y="122.3" textLength="17.1" lengthAdjust="spacingAndGlyphs">100</text>
</g>
<text transform="translate(15.9,433.7) rotate(-90)" font-size="12.5" fill="#8a5a36" textLength="228" lengthAdjust="spacingAndGlyphs">PID_LOOPZ_TEST/IAE_IMPROVEMENT</text>
<g stroke="#2a2a2a" stroke-width="1" shape-rendering="crispEdges">
<line x1="262.5" y1="515" x2="262.5" y2="528"/>
<line x1="276.5" y1="517.5" x2="276.5" y2="522"/>
<line x1="290.5" y1="517.5" x2="290.5" y2="522"/>
<line x1="304.5" y1="517.5" x2="304.5" y2="522"/>
<line x1="318.6" y1="515" x2="318.6" y2="528"/>
<line x1="332.6" y1="517.5" x2="332.6" y2="522"/>
<line x1="346.6" y1="517.5" x2="346.6" y2="522"/>
<line x1="360.6" y1="517.5" x2="360.6" y2="522"/>
<line x1="374.6" y1="515" x2="374.6" y2="528"/>
<line x1="388.6" y1="517.5" x2="388.6" y2="522"/>
<line x1="402.6" y1="517.5" x2="402.6" y2="522"/>
<line x1="416.6" y1="517.5" x2="416.6" y2="522"/>
<line x1="430.6" y1="515" x2="430.6" y2="528"/>
<line x1="444.7" y1="517.5" x2="444.7" y2="522"/>
<line x1="458.7" y1="517.5" x2="458.7" y2="522"/>
<line x1="472.7" y1="517.5" x2="472.7" y2="522"/>
<line x1="486.7" y1="515" x2="486.7" y2="528"/>
<line x1="500.7" y1="517.5" x2="500.7" y2="522"/>
<line x1="514.7" y1="517.5" x2="514.7" y2="522"/>
<line x1="528.7" y1="517.5" x2="528.7" y2="522"/>
<line x1="542.8" y1="515" x2="542.8" y2="528"/>
<line x1="556.8" y1="517.5" x2="556.8" y2="522"/>
<line x1="570.8" y1="517.5" x2="570.8" y2="522"/>
<line x1="584.8" y1="517.5" x2="584.8" y2="522"/>
<line x1="598.8" y1="515" x2="598.8" y2="528"/>
<line x1="612.8" y1="517.5" x2="612.8" y2="522"/>
<line x1="626.8" y1="517.5" x2="626.8" y2="522"/>
<line x1="640.8" y1="517.5" x2="640.8" y2="522"/>
<line x1="654.8" y1="515" x2="654.8" y2="528"/>
<line x1="668.9" y1="517.5" x2="668.9" y2="522"/>
<line x1="682.9" y1="517.5" x2="682.9" y2="522"/>
<line x1="696.9" y1="517.5" x2="696.9" y2="522"/>
<line x1="710.9" y1="515" x2="710.9" y2="528"/>
<line x1="724.9" y1="517.5" x2="724.9" y2="522"/>
<line x1="738.9" y1="517.5" x2="738.9" y2="522"/>
<line x1="752.9" y1="517.5" x2="752.9" y2="522"/>
<line x1="767.0" y1="515" x2="767.0" y2="528"/>
<line x1="781.0" y1="517.5" x2="781.0" y2="522"/>
<line x1="795.0" y1="517.5" x2="795.0" y2="522"/>
<line x1="809.0" y1="517.5" x2="809.0" y2="522"/>
<line x1="823.0" y1="515" x2="823.0" y2="528"/>
<line x1="837.0" y1="517.5" x2="837.0" y2="522"/>
<line x1="851.0" y1="517.5" x2="851.0" y2="522"/>
<line x1="865.0" y1="517.5" x2="865.0" y2="522"/>
<line x1="879.0" y1="515" x2="879.0" y2="528"/>
<line x1="893.1" y1="517.5" x2="893.1" y2="522"/>
<line x1="907.1" y1="517.5" x2="907.1" y2="522"/>
<line x1="921.1" y1="517.5" x2="921.1" y2="522"/>
</g>
<g fill="#1e2a36" font-size="12.4">
<text x="249.3" y="539.4" textLength="26" lengthAdjust="spacingAndGlyphs">10:52</text>
<text x="305.4" y="539.4" textLength="26" lengthAdjust="spacingAndGlyphs">10:53</text>
<text x="361.4" y="539.4" textLength="26" lengthAdjust="spacingAndGlyphs">10:54</text>
<text x="417.4" y="539.4" textLength="26" lengthAdjust="spacingAndGlyphs">10:55</text>
<text x="473.5" y="539.4" textLength="26" lengthAdjust="spacingAndGlyphs">10:56</text>
<text x="529.5" y="539.4" textLength="26" lengthAdjust="spacingAndGlyphs">10:57</text>
<text x="585.6" y="539.4" textLength="26" lengthAdjust="spacingAndGlyphs">10:58</text>
<text x="641.6" y="539.4" textLength="26" lengthAdjust="spacingAndGlyphs">10:59</text>
<text x="697.7" y="539.4" textLength="26" lengthAdjust="spacingAndGlyphs">11:00</text>
<text x="753.8" y="539.4" textLength="26" lengthAdjust="spacingAndGlyphs">11:01</text>
<text x="809.8" y="539.4" textLength="26" lengthAdjust="spacingAndGlyphs">11:02</text>
<text x="865.8" y="539.4" textLength="26" lengthAdjust="spacingAndGlyphs">11:03</text>
</g>
<text x="15" y="552.8" font-size="12.3" fill="#1e2a36" textLength="86" lengthAdjust="spacingAndGlyphs">22 Wed Nov 2006</text>
<text x="475" y="94.5" text-anchor="middle" font-size="17.7" fill="#101418">Deadtime CompensatorTest</text>
<text x="475" y="110" text-anchor="middle" font-size="11" fill="#1e2a36">(Various Delay/Lag Ratios)</text>
<line x1="259" y1="360" x2="922" y2="360" stroke="#b4b4b4" stroke-width="1.2"/>
<line x1="259" y1="319.8" x2="922" y2="319.8" stroke="#a0a040" stroke-width="1.3"/>
<path d="M507.4,521.0 C507.4,521.0 509.1,516.2 510.0,514.0 C510.9,511.8 511.8,509.8 513.0,508.0 C514.2,506.2 515.7,504.6 517.0,503.5 C518.3,502.4 519.8,501.6 521.0,501.2 C522.2,500.8 522.6,500.8 524.2,500.8 C527.8,500.7 538.9,500.7 542.7,500.8 C544.9,500.9 545.6,501.0 547.0,501.5 C548.4,502.0 549.7,502.8 551.0,504.0 C552.3,505.2 553.8,506.8 555.0,508.5 C556.2,510.2 557.5,512.4 558.5,514.5 C559.5,516.6 561.3,521.0 561.3,521.0" fill="none" stroke="#a0663c" stroke-width="1.2" stroke-linejoin="round" stroke-linecap="butt"/>
<path d="M259.0,239.0 C259.0,239.0 269.8,237.9 275.0,237.5 C280.2,237.1 284.9,236.6 290.0,236.3 C295.1,236.0 300.5,235.8 305.5,235.7 C310.5,235.6 313.4,235.7 320.0,236.0 C326.6,236.3 336.7,236.9 345.0,237.3 C353.3,237.7 362.3,238.2 370.0,238.6 C377.7,239.0 382.7,239.4 391.0,239.5 C399.3,239.6 410.2,239.5 420.0,239.3 C429.8,239.2 440.8,238.8 450.0,238.6 C459.2,238.4 469.5,238.3 475.0,238.2 C478.9,238.2 482.9,238.2 482.9,238.2 C482.9,238.2 484.5,240.8 485.5,242.6 C486.5,244.3 487.2,246.1 489.0,248.7 C490.8,251.3 493.7,254.7 496.0,258.4 C498.3,262.1 500.7,266.3 503.0,270.7 C505.3,275.1 507.3,279.7 510.0,284.7 C512.7,289.7 516.0,295.5 519.0,300.5 C522.0,305.5 525.4,311.1 527.7,314.6 C530.0,318.1 530.7,318.7 533.0,321.6 C535.3,324.5 538.8,329.1 541.7,332.0 C544.6,334.9 547.6,337.1 550.5,339.0 C553.4,340.9 556.4,342.5 559.3,343.5 C562.2,344.5 565.1,344.7 568.0,344.8 C570.9,344.9 573.7,344.6 576.9,344.0 C580.1,343.4 583.9,342.4 587.4,341.0 C590.9,339.6 594.5,337.4 598.0,335.6 C601.5,333.8 605.0,332.2 608.5,330.4 C612.0,328.6 616.2,326.3 619.0,324.8 C621.8,323.3 622.8,322.2 625.0,321.2 C627.2,320.2 629.4,320.0 632.0,319.0 C634.6,318.0 637.6,316.4 640.8,315.4 C644.0,314.4 647.5,313.4 651.3,312.8 C655.1,312.2 659.2,312.1 663.6,312.0 C668.0,311.9 673.0,311.8 677.7,312.0 C682.4,312.2 687.3,312.7 691.7,313.3 C696.1,313.9 699.9,315.0 704.0,315.8 C708.1,316.6 711.9,317.3 716.3,318.0 C720.7,318.7 725.1,319.4 730.4,319.8 C735.7,320.2 739.2,320.5 748.0,320.7 C757.1,320.9 771.3,321.1 785.0,321.0 C798.7,320.9 815.8,320.5 830.0,320.3 C844.2,320.1 854.7,319.9 870.0,319.7 C885.3,319.5 922.0,319.3 922.0,319.3" fill="none" stroke="#f0a078" stroke-width="1.3" stroke-linejoin="round" stroke-linecap="butt"/>
<path d="M259.0,252.3 C259.0,252.3 272.3,250.8 280.0,250.0 C287.7,249.2 294.2,248.5 305.0,247.8 C315.8,247.1 330.7,246.4 345.0,245.8 C359.3,245.2 375.2,244.6 391.0,244.0 C406.8,243.4 426.0,242.4 440.0,242.0 C454.0,241.6 467.9,241.8 475.0,241.7 C478.7,241.7 482.4,241.5 482.4,241.5 C482.4,241.5 484.1,244.1 485.5,246.0 C486.9,247.9 489.1,251.1 490.8,253.0 C492.6,254.9 494.0,256.4 496.0,257.5 C498.0,258.6 500.1,259.2 503.0,259.8 C505.9,260.4 510.1,260.8 513.6,261.0 C517.1,261.2 520.5,261.4 524.0,261.0 C527.5,260.6 531.2,259.4 534.7,258.7 C538.2,258.0 540.6,257.3 545.0,257.0 C549.4,256.7 557.5,256.2 561.0,257.0 C564.4,257.8 564.0,260.2 566.0,262.0 C568.0,263.8 570.7,266.3 573.0,268.0 C575.3,269.7 577.3,271.2 580.0,272.4 C582.7,273.6 586.0,274.7 589.0,275.4 C592.0,276.1 595.3,276.4 598.0,276.5 C600.7,276.6 602.7,276.6 605.0,276.3 C607.3,276.0 609.1,275.4 612.0,274.5 C614.9,273.6 619.2,272.0 622.5,271.0 C625.8,270.0 629.4,269.1 632.0,268.5 C634.6,267.9 636.2,267.4 638.2,267.7 C640.2,268.0 642.1,268.9 644.3,270.3 C646.5,271.7 648.9,274.1 651.3,276.0 C653.6,277.9 656.0,280.3 658.4,282.0 C660.8,283.7 662.8,285.0 665.4,286.0 C668.0,287.0 670.7,287.8 674.2,288.2 C677.7,288.6 683.0,288.8 686.5,288.2 C690.0,287.6 692.3,286.0 695.2,284.7 C698.1,283.4 701.1,281.5 704.0,280.3 C706.9,279.1 710.2,277.9 712.8,277.3 C715.4,276.7 717.8,276.5 719.8,276.8 C721.8,277.1 722.6,277.8 725.0,279.4 C727.4,281.0 730.9,284.3 733.9,286.5 C736.9,288.7 739.8,290.9 742.7,292.6 C745.6,294.3 748.5,295.7 751.4,296.7 C754.3,297.7 757.9,298.2 760.2,298.4 C762.6,298.6 763.5,298.5 765.5,298.0 C767.5,297.5 770.2,296.5 772.5,295.3 C774.8,294.1 777.6,291.9 779.5,290.9 C781.4,289.8 781.7,290.0 783.8,289.0 C786.0,288.0 789.8,285.7 792.6,284.7 C795.4,283.7 798.2,282.9 800.5,283.0 C802.8,283.1 804.1,284.0 806.6,285.6 C809.1,287.2 812.2,290.1 815.4,292.6 C818.6,295.1 822.5,298.4 826.0,300.5 C829.5,302.6 833.3,304.5 836.5,305.4 C839.7,306.3 842.6,306.2 845.2,306.0 C847.8,305.8 849.7,305.6 852.3,304.4 C854.9,303.2 858.1,300.9 861.0,298.8 C863.9,296.7 867.1,293.4 869.8,291.7 C872.4,290.0 874.5,289.2 876.9,288.6 C879.2,288.0 881.6,287.7 883.9,288.2 C886.2,288.7 888.3,289.6 890.9,291.4 C893.5,293.2 896.8,296.4 899.7,298.8 C902.6,301.2 905.6,303.7 908.5,305.8 C911.4,307.9 915.0,310.3 917.3,311.4 C919.5,312.5 922.0,312.5 922.0,312.5" fill="none" stroke="#1a808c" stroke-width="1.6" stroke-linejoin="round" stroke-linecap="butt"/>
<path d="M259.0,326.6 C259.0,326.6 269.8,324.9 275.0,324.0 C280.2,323.1 285.0,322.3 290.0,321.5 C295.0,320.7 300.0,319.9 305.0,319.3 C310.0,318.7 314.2,318.1 320.0,317.6 C325.8,317.1 331.7,316.7 340.0,316.5 C348.3,316.3 360.0,316.2 370.0,316.5 C380.0,316.8 388.3,318.1 400.0,318.5 C411.7,318.9 427.5,319.0 440.0,319.2 C452.5,319.4 467.9,319.7 475.0,319.8 C478.7,319.9 482.4,319.8 482.4,319.8 C482.4,319.8 483.4,316.3 483.8,312.8 C484.3,308.7 484.8,300.0 485.5,295.0 C486.2,290.0 486.8,287.7 488.0,283.0 C489.2,278.3 491.0,271.7 492.6,267.0 C494.2,262.3 496.1,258.1 497.8,254.9 C499.5,251.7 501.0,249.7 503.0,247.8 C505.0,245.9 507.7,244.6 510.0,243.4 C512.3,242.2 514.9,241.4 517.0,240.8 C519.1,240.2 520.6,239.8 522.4,240.0 C524.2,240.2 525.9,240.5 527.7,241.7 C529.5,242.9 531.0,244.8 533.0,247.0 C535.0,249.2 538.0,252.3 540.0,254.9 C542.0,257.5 543.0,259.3 545.0,262.8 C547.0,266.3 549.9,271.9 552.3,276.0 C554.7,280.1 557.0,283.5 559.3,287.3 C561.6,291.1 564.0,295.1 566.3,298.8 C568.6,302.5 570.9,305.9 573.3,309.3 C575.6,312.7 578.0,315.9 580.4,319.0 C582.8,322.1 585.1,325.2 587.4,327.7 C589.7,330.2 592.1,332.1 594.4,333.9 C596.7,335.7 599.0,337.1 601.4,338.3 C603.8,339.5 606.1,340.2 608.5,340.9 C610.9,341.6 612.6,342.1 615.5,342.3 C618.4,342.5 622.7,342.7 626.0,342.3 C629.3,341.9 632.2,341.1 635.5,340.0 C638.8,338.9 642.5,337.2 646.0,335.6 C649.5,334.0 653.1,332.2 656.6,330.4 C660.1,328.6 663.5,326.6 667.0,324.8 C670.5,323.0 674.5,321.2 677.7,319.8 C681.0,318.4 683.6,317.3 686.5,316.3 C689.4,315.3 692.0,314.7 695.2,314.0 C698.4,313.3 702.3,312.7 705.8,312.3 C709.3,311.9 712.8,311.7 716.3,311.6 C719.8,311.6 723.1,311.7 726.9,312.0 C730.7,312.3 735.1,312.7 739.2,313.3 C743.3,313.9 747.0,314.7 751.4,315.4 C755.8,316.1 761.4,317.1 765.5,317.7 C769.6,318.3 771.9,318.6 776.0,319.0 C780.1,319.4 783.0,319.7 790.0,320.0 C797.3,320.3 808.3,320.6 820.0,320.7 C831.7,320.8 849.2,320.6 860.0,320.5 C870.8,320.4 874.7,320.0 885.0,319.8 C895.3,319.6 922.0,319.5 922.0,319.5" fill="none" stroke="#0a7a10" stroke-width="1.7" stroke-linejoin="round" stroke-linecap="butt"/>
<path d="M259.0,337.5 C259.0,337.5 284.8,335.7 300.0,334.7 C315.2,333.7 333.3,332.4 350.0,331.3 C366.7,330.2 383.3,329.0 400.0,327.9 C416.7,326.8 437.5,325.4 450.0,324.5 C462.5,323.6 469.6,323.1 475.0,322.8 C478.7,322.6 482.4,322.5 482.4,322.5 C482.4,322.5 483.3,318.3 483.8,314.0 C484.3,309.4 484.8,300.1 485.5,295.0 C486.2,289.9 486.8,288.0 488.0,283.5 C489.2,279.0 491.0,272.5 492.6,268.0 C494.2,263.5 496.1,259.5 497.8,256.6 C499.5,253.7 501.0,252.1 503.0,250.5 C505.0,248.9 507.7,248.1 510.0,247.0 C512.3,245.9 515.1,244.7 517.0,244.0 C518.9,243.3 519.7,242.7 521.5,243.0 C523.3,243.3 525.5,244.3 527.7,245.7 C529.9,247.1 532.4,249.6 534.7,251.3 C537.0,253.0 539.4,254.6 541.7,255.7 C544.1,256.8 545.9,257.3 548.8,258.0 C551.7,258.7 555.8,259.5 559.3,259.8 C562.8,260.1 566.3,260.1 569.8,260.0 C573.3,259.9 576.9,259.5 580.4,259.2 C583.9,258.9 587.5,258.4 591.0,258.0 C594.5,257.6 598.5,256.3 601.4,256.6 C604.3,256.9 606.1,258.5 608.5,260.0 C610.9,261.5 613.2,263.9 615.5,265.4 C617.8,266.9 620.2,268.0 622.5,269.0 C624.8,270.0 627.2,270.8 629.5,271.6 C631.8,272.4 634.1,273.3 636.0,274.0 C637.9,274.7 639.5,275.4 641.0,275.8 C642.5,276.2 643.5,276.4 645.0,276.5 C646.5,276.6 648.2,276.5 650.0,276.2 C651.8,275.9 654.0,275.3 656.0,274.8 C658.0,274.3 659.5,273.8 662.0,273.0 C664.5,272.2 667.8,271.0 670.7,270.3 C673.6,269.6 676.8,268.9 679.4,268.9 C682.0,268.9 683.9,269.3 686.5,270.3 C689.1,271.3 692.3,273.2 695.2,275.0 C698.1,276.8 701.1,279.2 704.0,280.8 C706.9,282.4 709.9,283.7 712.8,284.7 C715.7,285.7 718.7,286.4 721.6,286.8 C724.5,287.2 727.5,287.5 730.4,287.2 C733.3,286.9 736.3,286.1 739.2,285.2 C742.1,284.3 745.1,283.1 748.0,282.0 C750.9,280.9 754.2,279.3 756.7,278.6 C759.2,277.9 760.9,277.6 762.9,277.7 C764.9,277.8 766.8,278.5 769.0,279.4 C771.2,280.3 773.5,281.7 776.0,283.3 C778.5,284.9 781.0,287.3 783.8,289.0 C786.6,290.7 789.7,292.3 792.6,293.5 C795.5,294.7 798.1,295.6 801.3,296.0 C804.5,296.4 808.7,296.3 811.9,296.0 C815.1,295.7 817.8,295.4 820.7,294.4 C823.6,293.4 826.5,291.4 829.4,290.0 C832.3,288.6 835.6,286.8 838.2,286.0 C840.8,285.2 842.9,284.9 845.2,285.0 C847.6,285.1 849.7,285.5 852.3,286.5 C854.9,287.5 858.1,289.1 861.0,290.9 C863.9,292.6 867.1,295.2 869.8,297.0 C872.4,298.8 874.5,300.2 876.9,301.4 C879.2,302.6 881.0,303.6 883.9,304.0 C886.8,304.4 891.2,304.7 894.4,304.0 C897.6,303.3 900.3,301.4 903.2,300.0 C906.1,298.6 908.9,296.8 912.0,295.3 C915.1,293.8 922.0,291.2 922.0,291.2" fill="none" stroke="#8a1a8c" stroke-width="1.7" stroke-linejoin="round" stroke-linecap="butt"/>
<path d="M858,319.9 L875,319.5 L922,319.3" fill="none" stroke="#c08a2c" stroke-width="1.5"/>
<path d="M788,319.6 L800,320" fill="none" stroke="#e09048" stroke-width="1.3"/>
<text x="626.5" y="193" text-anchor="middle" font-size="17" font-weight="bold" fill="#6a0a7a">110% Increase in Model Delay</text>
<text x="620" y="230.5" font-size="14" font-weight="bold" fill="#6a0a7a">AC2</text>
<text x="607" y="303.5" font-size="14.5" font-weight="bold" fill="#1a8a1a">AC1</text>
<text x="621" y="445.5" text-anchor="middle" font-size="17" font-weight="bold" fill="#b0200c">Original Plant Delay</text>
<text x="618.5" y="466" text-anchor="middle" font-size="17" font-weight="bold" fill="#111"><tspan>Original Delay/Lag Ratio = </tspan><tspan fill="#b0200c">4.0</tspan></text>
<line x1="620.8" y1="233.8" x2="607.2" y2="250.1" stroke="#111" stroke-width="1.2"/><polygon points="601.4,257 604.4,247.8 609.9,252.4" fill="#111"/>
<line x1="609.3" y1="306.7" x2="595.7" y2="323.1" stroke="#111" stroke-width="1.2"/><polygon points="590,330 593.0,320.8 598.5,325.4" fill="#111"/>

<rect x="4" y="556" width="942" height="18" fill="url(#gs)"/>
<rect x="4" y="555" width="942" height="1" fill="#c4ccd4"/>
<rect x="5.5" y="557.4" width="17" height="14.4" rx="1.5" fill="#cbd8fb" stroke="#c3d1f8" stroke-width="1"/>
<path d="M15.2,561.2 L12,564.5 L15.2,567.8" stroke="#3a4a80" stroke-width="1.8" fill="none"/>
<rect x="898.2" y="557.2" width="14" height="14" rx="1.5" fill="#cdd8f9" stroke="#c6d2f6" stroke-width="0.8"/>
<path d="M902.5,560.5V567.5M904.5,560.5V567.5M906.5,560.5V567.5M908.5,560.5V567.5" stroke="#c0cef6" stroke-width="1"/>
<rect x="928.4" y="557.4" width="14.5" height="14.2" rx="1.5" fill="#cbd8fb" stroke="#c3d1f8" stroke-width="1"/>
<path d="M934.6,561.2 L937.8,564.5 L934.6,567.8" stroke="#3a4a80" stroke-width="1.8" fill="none"/>
<text x="447.4" y="572" font-size="14" font-weight="bold" textLength="74" lengthAdjust="spacingAndGlyphs"><tspan fill="#b0200c">Step </tspan><tspan fill="#111">Upset</tspan></text>
<line x1="485.5" y1="558" x2="485.5" y2="533" stroke="#111" stroke-width="1.5"/><polygon points="485.5,525.5 482.3,534 488.7,534" fill="#111"/>
<rect x="4" y="574" width="942" height="20" fill="#ece9d8"/>
<rect x="4" y="573.8" width="942" height="2" fill="#b4c0d0"/>
<rect x="4" y="592.5" width="942" height="1.5" fill="#d4d0bc"/>
<rect x="267" y="577" width="1" height="15" fill="#c8c5b2"/><rect x="268" y="577" width="1" height="15" fill="#fbfaf4"/>
<rect x="362" y="577" width="1" height="15" fill="#c8c5b2"/><rect x="363" y="577" width="1" height="15" fill="#fbfaf4"/>
<rect x="405.5" y="577" width="1" height="15" fill="#c8c5b2"/><rect x="406.5" y="577" width="1" height="15" fill="#fbfaf4"/>
<rect x="446" y="577" width="1" height="15" fill="#c8c5b2"/><rect x="447" y="577" width="1" height="15" fill="#fbfaf4"/>
<rect x="521" y="577" width="1" height="15" fill="#c8c5b2"/><rect x="522" y="577" width="1" height="15" fill="#fbfaf4"/>
<text x="15" y="589.3" font-size="12.5" fill="#2a2a2a" textLength="119" lengthAdjust="spacingAndGlyphs">Parameter Reference</text>
<text x="276" y="589.3" font-size="12.5" fill="#2a2a2a" textLength="57.3" lengthAdjust="spacingAndGlyphs">Descriptor</text>
<text x="371.2" y="589.3" font-size="12.5" fill="#2a2a2a" textLength="29.8" lengthAdjust="spacingAndGlyphs">Value</text>
<text x="414.5" y="589.3" font-size="12.5" fill="#2a2a2a" textLength="27.5" lengthAdjust="spacingAndGlyphs">Units</text>
<text x="455.6" y="589.3" font-size="12.5" fill="#2a2a2a" textLength="62.3" lengthAdjust="spacingAndGlyphs">Timestamp</text>
<rect x="4" y="594" width="942" height="124" fill="#a0b4c6"/>
<rect x="4" y="574" width="3" height="144" fill="#dfe6f0"/>
<rect x="11" y="595.5" width="14" height="14" fill="#008000"/>
<rect x="25" y="595.5" width="170" height="14" fill="#ece9d8"/>
<text x="27" y="607.3" font-size="12.4" fill="#1c242c">*</text>
<text x="35.2" y="607.3" font-size="12.4" fill="#1c242c" textLength="156" lengthAdjust="spacingAndGlyphs">PID_LOOPZ_TEST/AC1/PV</text>
<text x="368.7" y="607.3" font-size="12.4" fill="#1c242c">55.36</text>
<text x="453.2" y="607.3" font-size="12.4" fill="#1c242c">11/22/200...</text>
<rect x="11" y="610.6" width="14" height="14" fill="#000080"/>
<text x="33.4" y="622.4" font-size="12.4" fill="#1c242c" textLength="156" lengthAdjust="spacingAndGlyphs">PID_LOOPZ_TEST/AC1/SP</text>
<text x="368.7" y="622.4" font-size="12.4" fill="#1c242c">50.00</text>
<text x="453.2" y="622.4" font-size="12.4" fill="#1c242c">11/22/200...</text>
<rect x="11" y="625.8" width="14" height="14" fill="#ff8040"/>
<text x="33.4" y="637.6" font-size="12.4" fill="#1c242c" textLength="165" lengthAdjust="spacingAndGlyphs">PID_LOOPZ_TEST/AC1/OUT</text>
<text x="368.7" y="637.6" font-size="12.4" fill="#1c242c">73.0</text>
<text x="453.2" y="637.6" font-size="12.4" fill="#1c242c">11/22/200...</text>
<rect x="11" y="641.0" width="14" height="14" fill="#800080"/>
<rect x="25" y="641.0" width="170" height="14" fill="#ece9d8"/>
<text x="27" y="652.8" font-size="12.4" fill="#1c242c">*</text>
<text x="35.2" y="652.8" font-size="12.4" fill="#1c242c" textLength="156" lengthAdjust="spacingAndGlyphs">PID_LOOPZ_TEST/AC2/PV</text>
<text x="368.7" y="652.8" font-size="12.4" fill="#1c242c">38.08</text>
<text x="453.2" y="652.8" font-size="12.4" fill="#1c242c">11/22/200...</text>
<rect x="11" y="656.1" width="14" height="14" fill="#808000"/>
<text x="33.4" y="667.9" font-size="12.4" fill="#1c242c" textLength="156" lengthAdjust="spacingAndGlyphs">PID_LOOPZ_TEST/AC2/SP</text>
<text x="368.7" y="667.9" font-size="12.4" fill="#1c242c">50.00</text>
<text x="453.2" y="667.9" font-size="12.4" fill="#1c242c">11/22/200...</text>
<rect x="11" y="671.2" width="14" height="14" fill="#008080"/>
<rect x="25" y="671.2" width="179" height="14" fill="#ece9d8"/>
<text x="27" y="683.0" font-size="12.4" fill="#1c242c">*</text>
<text x="35.2" y="683.0" font-size="12.4" fill="#1c242c" textLength="165" lengthAdjust="spacingAndGlyphs">PID_LOOPZ_TEST/AC2/OUT</text>
<text x="368.7" y="683.0" font-size="12.4" fill="#1c242c">59.5</text>
<text x="453.2" y="683.0" font-size="12.4" fill="#1c242c">11/22/200...</text>
<rect x="11" y="686.4" width="14" height="14" fill="#808080"/>
<text x="33.4" y="698.2" font-size="12.4" fill="#1c242c" textLength="220.7" lengthAdjust="spacingAndGlyphs">PID_LOOPZ_TEST/PROCESS_DELAY</text>
<text x="368.7" y="698.2" font-size="12.4" fill="#1c242c">40.00</text>
<text x="453.2" y="698.2" font-size="12.4" fill="#1c242c">11/22/200...</text>
<rect x="11" y="701.5" width="14" height="14" fill="#804000"/>
<text x="33.4" y="713.3" font-size="12.4" fill="#1c242c" textLength="226.8" lengthAdjust="spacingAndGlyphs">PID_LOOPZ_TEST/IAE_IMPROVEMENT</text>
<text x="368.7" y="713.3" font-size="12.4" fill="#1c242c">-40...</text>
<text x="453.2" y="713.3" font-size="12.4" fill="#1c242c">11/22/200...</text>
<text x="609.3" y="612.3" font-size="17" fill="#1f9a1f" font-weight="bold">AC1 = standard PI</text>
<text x="609.3" y="632.3" font-size="17" fill="#1f9a1f" font-weight="bold">(Lambda = Lag and Reset = Lag)</text>
<text x="609.3" y="652.4" font-size="17" fill="#8a0a94" font-weight="bold">AC2 = dead time compensated PI</text>
<text x="609.3" y="672.4" font-size="17" fill="#8a0a94" font-weight="bold">(Lambda = Delay and Reset = Lag</text>
<text x="609.3" y="692.5" font-size="17" fill="#8a0a94" font-weight="bold">but with controller Gain increased</text>
<text x="609.3" y="712.5" font-size="17" fill="#8a0a94" font-weight="bold">and Reset decreased by factor of 2)</text>
<rect x="4" y="718" width="942" height="18" fill="#ece9d8"/>
<rect x="4" y="717" width="942" height="1" fill="#c8ccd0"/><rect x="4" y="718" width="942" height="1" fill="#fbfaf4"/>
<rect x="616.5" y="720.5" width="162" height="15" fill="none" stroke="#d6d3c0" stroke-width="1"/>
<rect x="780.5" y="720.5" width="146" height="15" fill="none" stroke="#d6d3c0" stroke-width="1"/>
<text x="619.3" y="732" font-size="12.6" fill="#2a2a2a" textLength="157" lengthAdjust="spacingAndGlyphs">Event journal not yet required</text>
<text x="783.5" y="732" font-size="12.6" fill="#2a2a2a" textLength="138" lengthAdjust="spacingAndGlyphs">History: USAUST-TEST717</text>
<path d="M941,733 l2,0 M937,733 l2,0 M941,729 l2,0 M933,733 l2,0 M937,729 l2,0 M941,725 l2,0" stroke="#b8b5a2" stroke-width="2"/>
<rect x="945" y="30" width="2" height="706" fill="#e0f2fe"/><rect x="4" y="78" width="1.5" height="478" fill="#98a6b4"/>
</g>
</svg>
</body></html>
